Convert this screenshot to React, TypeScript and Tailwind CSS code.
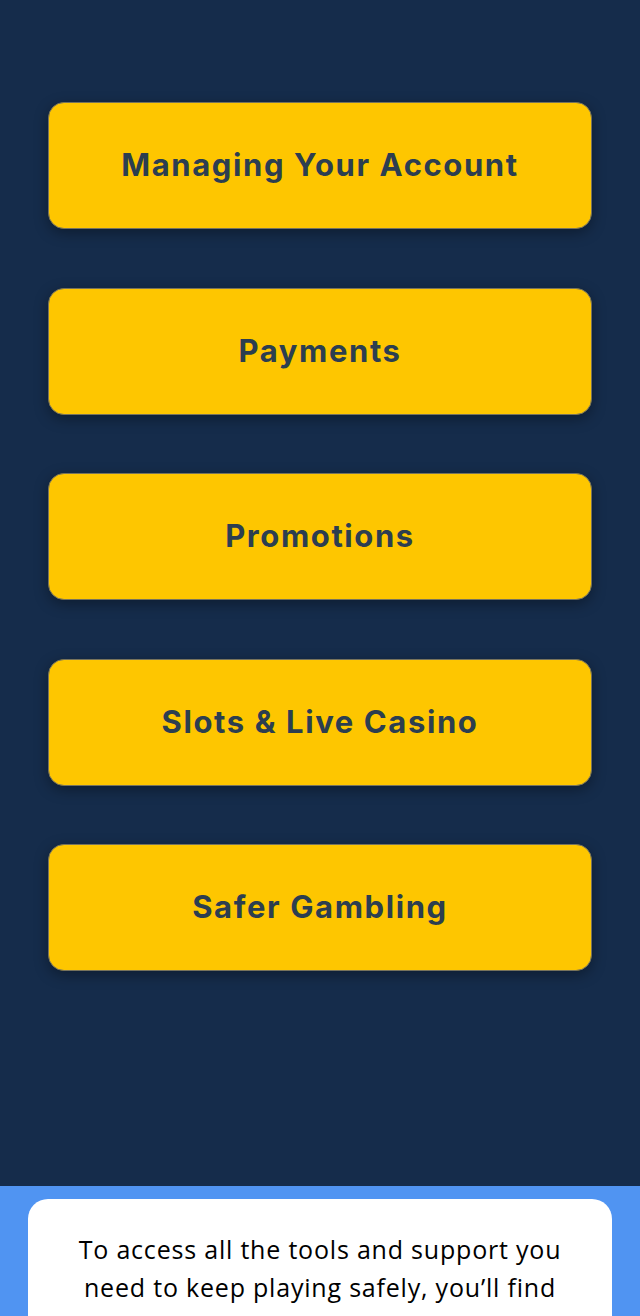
import React from 'react';

const topics = [
  'Managing Your Account',
  'Payments',
  'Promotions',
  'Slots & Live Casino',
  'Safer Gambling',
];

const App: React.FC = () => {
  return (
    <div className="h-[1316px] overflow-hidden bg-[#152c4b] flex flex-col" style={{ fontFamily: 'Inter, "Open Sans", sans-serif' }}>
      {/* Help topics */}
      <div className="flex flex-col gap-[58.5px] px-[48px] pt-[102px] pb-[215px]">
        {topics.map((t) => (
          <button
            key={t}
            className="h-[127px] w-full rounded-[16px] bg-[#fec600] border border-[#77735c] shadow-[0_4px_14px_rgba(0,0,0,0.35)] flex items-center justify-center"
          >
            <span className="text-[31px] font-bold text-[#2c3e50] tracking-[1.6px]">{t}</span>
          </button>
        ))}
      </div>

      {/* Safer gambling notice */}
      <div className="flex-1 bg-[#5094f2] px-[28px] pt-[13px]">
        <div className="bg-white rounded-t-[20px] h-full px-[38px] pt-[31px] pb-10">
          <p className="text-center text-[25px] leading-[38px] text-black tracking-[0.8px]" style={{ fontFamily: '"Open Sans", sans-serif' }}>
            To access all the tools and support you need to keep playing safely, you’ll find them in your account settings.
          </p>
        </div>
      </div>
    </div>
  );
};

export default App;
